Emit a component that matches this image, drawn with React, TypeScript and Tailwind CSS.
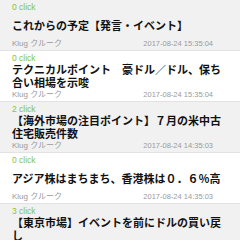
const items = [
  { clicks: 0, title: 'これからの予定【発言・イベント】', time: '2017-08-24 15:35:04' },
  { clicks: 0, title: 'テクニカルポイント　豪ドル／ドル、保ち合い相場を示唆', time: '2017-08-24 15:35:04' },
  { clicks: 2, title: '【海外市場の注目ポイント】７月の米中古住宅販売件数', time: '2017-08-24 14:35:03' },
  { clicks: 0, title: 'アジア株はまちまち、香港株は０．６％高', time: '2017-08-24 14:35:03' },
  { clicks: 3, title: '【東京市場】イベントを前にドルの買い戻し', time: '2017-08-24 14:35:03' },
]

export default function App() {
  return (
    <div
      className="w-[240px] h-[240px] overflow-hidden bg-white"
      style={{ fontFamily: '"Liberation Sans", "Noto Sans CJK JP", sans-serif' }}
    >
      {items.map((item, i) => (
        <div key={i} className={i % 2 === 0 ? 'bg-[#f1f1f1]' : 'bg-white'}>
          <div className="h-[51px] pl-[12px] pr-[12px] pt-[2px] border-b border-[#e2e2e2] flex flex-col">
            {/* click count */}
            <div className="h-[10px] leading-[10px] text-[8.5px] text-[#86c440] font-medium">
              {item.clicks} click
            </div>

            {/* title */}
            <div className="h-[26px] flex items-center">
              <p className="text-[11px] leading-[13px] font-bold text-[#111] break-all font-['Noto_Sans_CJK_JP',sans-serif]">
                {item.title}
              </p>
            </div>

            {/* meta */}
            <div className="h-[9px] mt-[1px] flex items-center justify-between pr-[15px]">
              <span className="text-[8px] text-[#9a9a9a]">Klug クルーク</span>
              <span className="text-[7.5px] text-[#9a9a9a]">{item.time}</span>
            </div>
          </div>
        </div>
      ))}
    </div>
  )
}
